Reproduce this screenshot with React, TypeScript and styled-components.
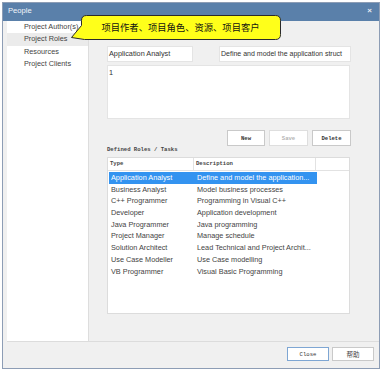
import React from "react";
import styled, { createGlobalStyle } from "styled-components";

const Global = createGlobalStyle`
  html, body { margin: 0; padding: 0; background: #ffffff; }
  body { width: 383px; height: 372px; overflow: hidden; }
  * { box-sizing: border-box; }
`;

const UI = `"Liberation Sans", "Noto Sans CJK SC", sans-serif`;
const MONO = `"Liberation Mono", "DejaVu Sans Mono", monospace`;

const Page = styled.div`
  position: relative;
  padding: 2px 0 0 2px;
  font-family: ${UI};
`;

const Window = styled.div`
  width: 378px;
  height: 367px;
  border: 1px solid #8d9db5;
  background: #f0f0f0;
  display: flex;
  flex-direction: column;
`;

const TitleBar = styled.div`
  height: 18px;
  flex: none;
  background: #5a80aa;
  color: #f2f6fa;
  font-size: 7.6px;
  display: flex;
  align-items: center;
  justify-content: space-between;
  padding: 0 7px 3px 5px;
`;

const CloseX = styled.span`
  font-size: 8px;
  font-weight: bold;
  color: #e6ecf3;
  line-height: 1;
`;

const Body = styled.div`
  flex: 1;
  display: flex;
  padding: 0 0 0 4px;
  min-height: 0;
`;

const Sidebar = styled.div`
  width: 82px;
  flex: none;
  background: #ffffff;
  border-right: 1px solid #dddddd;
  display: flex;
  flex-direction: column;
`;

const NavItem = styled.div<{ $active?: boolean }>`
  height: 12.3px;
  line-height: 12.3px;
  padding-left: 17px;
  font-size: 7.3px;
  color: #444444;
  white-space: nowrap;
  background: ${(p) => (p.$active ? "#ebebeb" : "transparent")};
`;

const Main = styled.div`
  flex: 1;
  padding: 25px 0 0 18px;
  display: flex;
  flex-direction: column;
  width: 262px;
`;

const FieldRow = styled.div`
  display: flex;
  gap: 26px;
  width: 244px;
`;

const Field = styled.div<{ $w: number; $small?: boolean }>`
  width: ${(p) => p.$w}px;
  height: 16px;
  background: #ffffff;
  border: 1px solid #e4e4e4;
  font-size: ${(p) => (p.$small ? 7 : 7.3)}px;
  color: #333;
  line-height: 14px;
  padding-left: 1px;
  white-space: nowrap;
  overflow: hidden;
`;

const TextArea = styled.div`
  margin-top: 3px;
  width: 243px;
  height: 54px;
  background: #ffffff;
  border: 1px solid #e4e4e4;
  font-size: 7.3px;
  color: #333;
  padding: 2px 0 0 1px;
`;

const ButtonRow = styled.div`
  margin-top: 11px;
  width: 244px;
  display: flex;
  justify-content: flex-end;
  gap: 4px;
`;

const Btn = styled.div<{ $w: number; $disabled?: boolean; $focus?: boolean }>`
  width: ${(p) => p.$w}px;
  height: 16px;
  background: #ffffff;
  border: 1px solid ${(p) => (p.$focus ? "#7ea6d3" : p.$disabled ? "#dedede" : "#c9c9c9")};
  font-family: ${MONO};
  font-size: 5.6px;
  font-weight: bold;
  color: ${(p) => (p.$disabled ? "#b4b4b4" : "#333")};
  display: flex;
  align-items: center;
  justify-content: center;
`;

const FooterBtn = styled(Btn)`
  height: 14px;
  font-weight: normal;
`;

const CnLabel = styled.span`
  font-family: "Noto Sans CJK SC", sans-serif;
  font-size: 6.5px;
  color: #444;
`;

const SectionLabel = styled.div`
  height: 11px;
  font-family: ${MONO};
  font-size: 5.6px;
  font-weight: bold;
  color: #444;
  line-height: 8px;
`;

const Table = styled.div`
  width: 243px;
  height: 157px;
  background: #ffffff;
  border: 1px solid #dcdcdc;
  display: flex;
  flex-direction: column;
`;

const Header = styled.div`
  display: grid;
  grid-template-columns: 86px 122px 1fr;
  height: 13px;
  border-bottom: 1px solid #e2e2e2;
`;

const HeadCell = styled.div`
  font-family: ${MONO};
  font-size: 5.6px;
  font-weight: bold;
  color: #444;
  line-height: 12px;
  padding-left: 2px;
  border-right: 1px solid #e2e2e2;
  &:last-child { border-right: none; }
`;

const Rows = styled.div`
  padding: 1px 0 0 1px;
  display: flex;
  flex-direction: column;
`;

const Row = styled.div<{ $sel?: boolean }>`
  display: grid;
  grid-template-columns: 86px 122px;
  width: 208px;
  height: 11.7px;
  line-height: 11.7px;
  font-size: 7.3px;
  color: ${(p) => (p.$sel ? "#ffffff" : "#444444")};
  background: ${(p) => (p.$sel ? "#3393f0" : "transparent")};
`;

const Cell = styled.div`
  padding-left: 2px;
  white-space: nowrap;
  overflow: hidden;
`;

const Footer = styled.div`
  flex: none;
  height: 27px;
  margin-left: 4px;
  border-top: 1px solid #dcdcdc;
  display: flex;
  justify-content: flex-end;
  gap: 3px;
  padding: 5px 5px 0 0;
`;

const Callout = styled.div`
  position: absolute;
  left: 70px;
  top: 14px;
  width: 212px;
  height: 27px;
`;

const CalloutShape = styled.svg`
  position: absolute;
  inset: 0;
`;

const CalloutText = styled.div`
  position: absolute;
  left: 11px;
  top: 1px;
  width: 199px;
  height: 24px;
  display: flex;
  align-items: center;
  justify-content: center;
  font-family: "Noto Sans CJK SC", sans-serif;
  font-size: 9.3px;
  color: #111;
`;

const roles: [string, string][] = [
  ["Application Analyst", "Define and model the application..."],
  ["Business Analyst", "Model business processes"],
  ["C++ Programmer", "Programming in Visual C++"],
  ["Developer", "Application development"],
  ["Java Programmer", "Java programming"],
  ["Project Manager", "Manage schedule"],
  ["Solution Architect", "Lead Technical and Project Archit..."],
  ["Use Case Modeller", "Use Case modelling"],
  ["VB Programmer", "Visual Basic Programming"],
];

export default function App() {
  return (
    <Page>
      <Global />
      <Window>
        <TitleBar>
          <span>People</span>
          <CloseX>×</CloseX>
        </TitleBar>
        <Body>
          <Sidebar>
            <NavItem>Project Author(s)</NavItem>
            <NavItem $active>Project Roles</NavItem>
            <NavItem>Resources</NavItem>
            <NavItem>Project Clients</NavItem>
          </Sidebar>
          <Main>
            <FieldRow>
              <Field $w={86}>Application Analyst</Field>
              <Field $w={132} $small>Define and model the application struct</Field>
            </FieldRow>
            <TextArea>1</TextArea>
            <ButtonRow>
              <Btn $w={38}>New</Btn>
              <Btn $w={39} $disabled>Save</Btn>
              <Btn $w={39}>Delete</Btn>
            </ButtonRow>
            <SectionLabel>Defined Roles / Tasks</SectionLabel>
            <Table>
              <Header>
                <HeadCell>Type</HeadCell>
                <HeadCell>Description</HeadCell>
                <HeadCell />
              </Header>
              <Rows>
                {roles.map(([t, d], i) => (
                  <Row key={t} $sel={i === 0}>
                    <Cell>{t}</Cell>
                    <Cell>{d}</Cell>
                  </Row>
                ))}
              </Rows>
            </Table>
          </Main>
        </Body>
        <Footer>
          <FooterBtn $w={42} $focus>Close</FooterBtn>
          <FooterBtn $w={42}>
            <CnLabel>帮助</CnLabel>
          </FooterBtn>
        </Footer>
      </Window>
      <Callout>
        <CalloutShape width="212" height="27" viewBox="0 0 212 27">
          <path
            d="M16.5,1.5 H205.5 Q210.5,1.5 210.5,6.5 V20.5 Q210.5,25.5 205.5,25.5 H14.5 L1.5,23.5 L11.5,11.5 V6.5 Q11.5,1.5 16.5,1.5 Z"
            fill="#ffff1a"
            stroke="#2a2a2a"
            strokeWidth="1"
          />
        </CalloutShape>
        <CalloutText>项目作者、项目角色、资源、项目客户</CalloutText>
      </Callout>
    </Page>
  );
}
